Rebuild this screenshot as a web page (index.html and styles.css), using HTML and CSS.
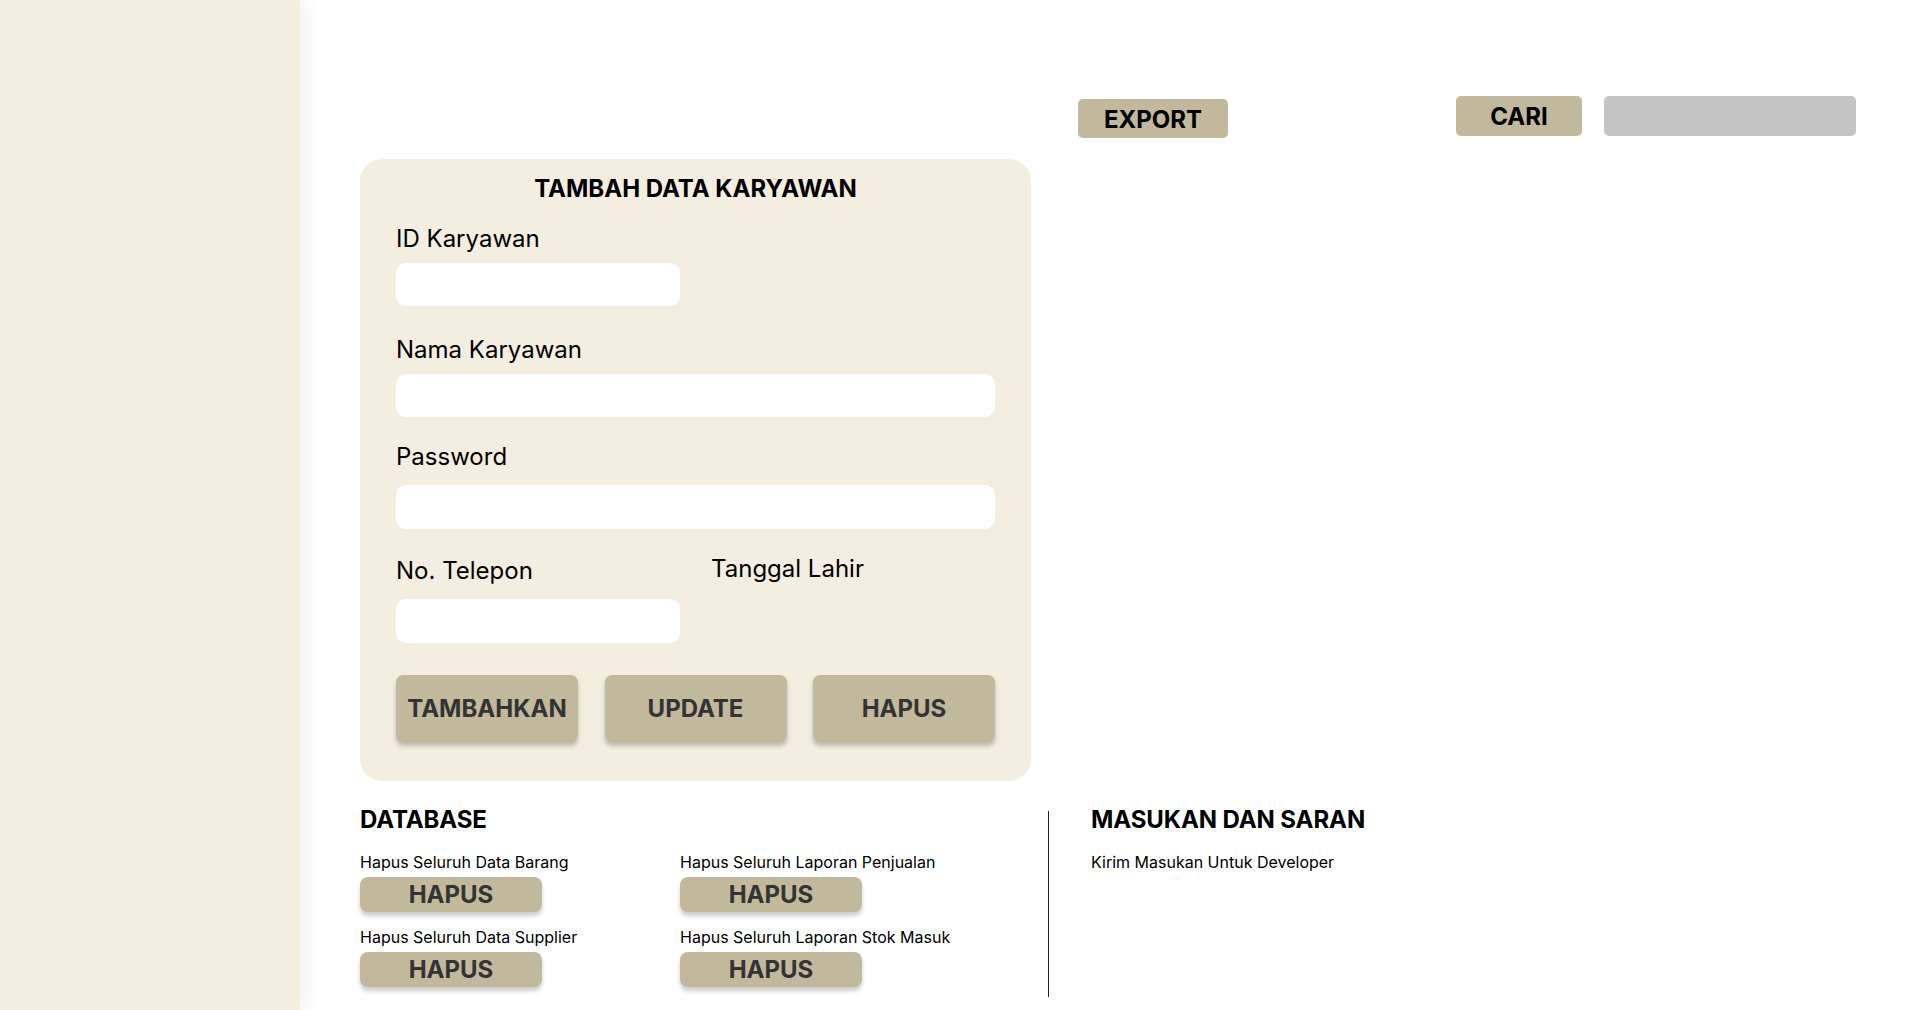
FILE: index.html
```html
<!DOCTYPE html>
<html lang="id">
<head>
<meta charset="utf-8">
<title>Karyawan</title>
<link rel="stylesheet" href="styles.css">
</head>
<body>
<aside class="sidebar"></aside>
<main class="content">
  <div class="topbar">
    <button class="top-btn export">EXPORT</button>
    <button class="top-btn cari">CARI</button>
    <div class="search"></div>
  </div>

  <section class="card">
    <h1 class="card-title">TAMBAH DATA KARYAWAN</h1>
    <label class="label l-id">ID Karyawan</label>
    <div class="input short i-id"></div>
    <label class="label l-nama">Nama Karyawan</label>
    <div class="input full i-nama"></div>
    <label class="label l-pass">Password</label>
    <div class="input full i-pass"></div>
    <div class="pair">
      <div class="pair-col first">
        <label class="label l-telp">No. Telepon</label>
        <div class="input short i-telp"></div>
      </div>
      <div class="pair-col second">
        <label class="label l-tgl">Tanggal Lahir</label>
      </div>
    </div>
    <div class="actions">
      <button class="act-btn">TAMBAHKAN</button>
      <button class="act-btn">UPDATE</button>
      <button class="act-btn">HAPUS</button>
    </div>
  </section>

  <section class="bottom">
    <div class="database">
      <h2 class="sec-title">DATABASE</h2>
      <div class="db-grid">
        <div class="db-item">
          <div class="db-label">Hapus Seluruh Data Barang</div>
          <button class="db-btn">HAPUS</button>
        </div>
        <div class="db-item">
          <div class="db-label">Hapus Seluruh Laporan Penjualan</div>
          <button class="db-btn">HAPUS</button>
        </div>
        <div class="db-item">
          <div class="db-label">Hapus Seluruh Data Supplier</div>
          <button class="db-btn">HAPUS</button>
        </div>
        <div class="db-item">
          <div class="db-label">Hapus Seluruh Laporan Stok Masuk</div>
          <button class="db-btn">HAPUS</button>
        </div>
      </div>
    </div>
    <div class="divider"></div>
    <div class="feedback">
      <h2 class="sec-title">MASUKAN DAN SARAN</h2>
      <div class="db-label">Kirim Masukan Untuk Developer</div>
    </div>
  </section>
</main>
</body>
</html>
```

FILE: styles.css
```css
* { box-sizing: border-box; }
html, body { margin: 0; padding: 0; }
body {
  display: flex;
  width: 1920px;
  height: 1010px;
  overflow: hidden;
  background: #ffffff;
  font-family: "Inter", "Liberation Sans", sans-serif;
  color: #000;
}
button {
  font-family: inherit;
  border: none;
  padding: 0;
  cursor: pointer;
}
.sidebar {
  width: 300px;
  flex: 0 0 300px;
  height: 1010px;
  background: #F4EEE1;
  box-shadow: 6px 0 18px rgba(0, 0, 0, 0.06);
  position: relative;
  z-index: 1;
}
.content {
  flex: 1;
  padding-left: 60px;
}
.topbar {
  display: flex;
  align-items: flex-start;
  padding-top: 96px;
  height: 138px;
}
.top-btn {
  background: #C2B89B;
  color: #000;
  font-weight: 700;
  font-size: 24px;
  border-radius: 5px;
  height: 40px;
}
.export {
  margin-left: 718px;
  margin-top: 3px;
  width: 150px;
  height: 39px;
  padding-top: 2px;
}
.cari {
  margin-left: 228px;
  width: 126px;
}
.search {
  margin-left: 22px;
  width: 252px;
  height: 40px;
  background: #C4C4C4;
  border-radius: 5px;
}
.card {
  margin-top: 21px;
  width: 671px;
  height: 622px;
  background: #F4EEE1;
  border-radius: 22px;
  padding: 15px 36px 39px;
  display: flex;
  flex-direction: column;
}
.card-title {
  margin: 0;
  text-align: center;
  font-size: 24px;
  font-weight: 700;
  line-height: 30px;
}
.label {
  display: block;
  font-size: 24px;
  font-weight: 400;
  line-height: 30px;
}
.l-id { margin-top: 20px; }
.l-nama { margin-top: 29px; }
.l-pass { margin-top: 25px; }
.input {
  background: #ffffff;
  border-radius: 10px;
  height: 43px;
}
.short { width: 284px; }
.full { width: 599px; }
.i-id, .i-nama { margin-top: 9px; }
.i-pass { margin-top: 13px; height: 44px; }
.pair {
  display: flex;
  margin-top: 27px;
}
.pair-col.first { flex: 0 0 315px; }
.pair-col.second { flex: 1; }
.l-tgl { margin-top: -2px; }
.i-telp { margin-top: 13px; height: 44px; }
.actions {
  display: flex;
  justify-content: space-between;
  margin-top: 32px;
}
.act-btn {
  width: 182px;
  height: 67px;
  background: #C2B89B;
  border-radius: 7px;
  color: #333333;
  font-size: 24px;
  font-weight: 700;
  box-shadow: 0 4px 4px rgba(0, 0, 0, 0.22);
}
.bottom {
  display: flex;
  margin-top: 24px;
}
.database {
  width: 688px;
}
.sec-title {
  margin: 0;
  font-size: 24px;
  font-weight: 700;
  line-height: 30px;
  letter-spacing: -0.1px;
}
.db-grid {
  display: grid;
  grid-template-columns: 320px 320px;
  row-gap: 15px;
  margin-top: 17px;
}
.db-label {
  font-size: 16px;
  line-height: 20px;
}
.db-btn {
  display: block;
  margin-top: 5px;
  width: 182px;
  height: 35px;
  background: #C2B89B;
  border-radius: 8px;
  color: #333333;
  font-size: 24px;
  font-weight: 700;
  box-shadow: 0 4px 4px rgba(0, 0, 0, 0.2);
}
.divider {
  width: 1px;
  height: 186px;
  margin-top: 6px;
  background: #222;
}
.feedback {
  margin-left: 42px;
}
.feedback .db-label {
  margin-top: 17px;
}
```
